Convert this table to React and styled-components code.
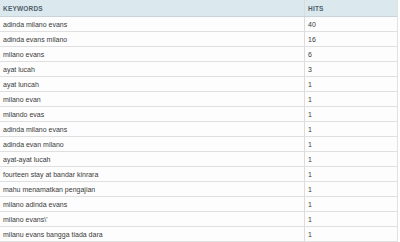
import React from 'react';
import styled, { createGlobalStyle } from 'styled-components';

const GlobalStyle = createGlobalStyle`
    body {
        margin: 0;
        background: #ffffff;
        font-family: "Liberation Sans", Arial, sans-serif;
    }
`;

const Table = styled.div`
    width: 397px;
    border-right: 1px solid #e2e2e2;
    background: #ffffff;
`;

const Row = styled.div`
    display: grid;
    grid-template-columns: 305px 1fr;
    height: ${(p) => (p.head ? '17px' : '15px')};
    box-sizing: border-box;
    border-bottom: 1px solid ${(p) => (p.head ? '#c9d3d8' : '#e0e0e0')};
    background: ${(p) => (p.head ? '#dbe9ef' : '#fdfdfd')};
`;

const Cell = styled.div`
    display: flex;
    align-items: center;
    padding-left: 3px;
    font-size: ${(p) => (p.head ? '6.5px' : '7px')};
    font-weight: ${(p) => (p.head ? 'bold' : 'normal')};
    color: ${(p) => (p.head ? '#4f5f6a' : '#3a3a3a')};
    letter-spacing: ${(p) => (p.head ? '0.2px' : '0')};
    border-right: ${(p) => (p.first ? '1px solid #dcdcdc' : 'none')};
    white-space: nowrap;
    overflow: hidden;
`;

const rows = [
    ['adinda milano evans', 40],
    ['adinda evans milano', 16],
    ['milano evans', 6],
    ['ayat lucah', 3],
    ['ayat luncah', 1],
    ['milano evan', 1],
    ['milando evas', 1],
    ['adinda milano evans', 1],
    ['adinda evan milano', 1],
    ['ayat-ayat lucah', 1],
    ['fourteen stay at bandar kinrara', 1],
    ['mahu menamatkan pengajian', 1],
    ['milano adinda evans', 1],
    ["milano evans\\'", 1],
    ['milanu evans bangga tiada dara', 1],
];

const App = () => {
    return (
        <>
            <GlobalStyle />
            <Table>
                <Row head>
                    <Cell head first>KEYWORDS</Cell>
                    <Cell head>HITS</Cell>
                </Row>
                {rows.map(([kw, hits], i) => (
                    <Row key={i}>
                        <Cell first>{kw}</Cell>
                        <Cell>{hits}</Cell>
                    </Row>
                ))}
            </Table>
        </>
    );
};

export default App;
